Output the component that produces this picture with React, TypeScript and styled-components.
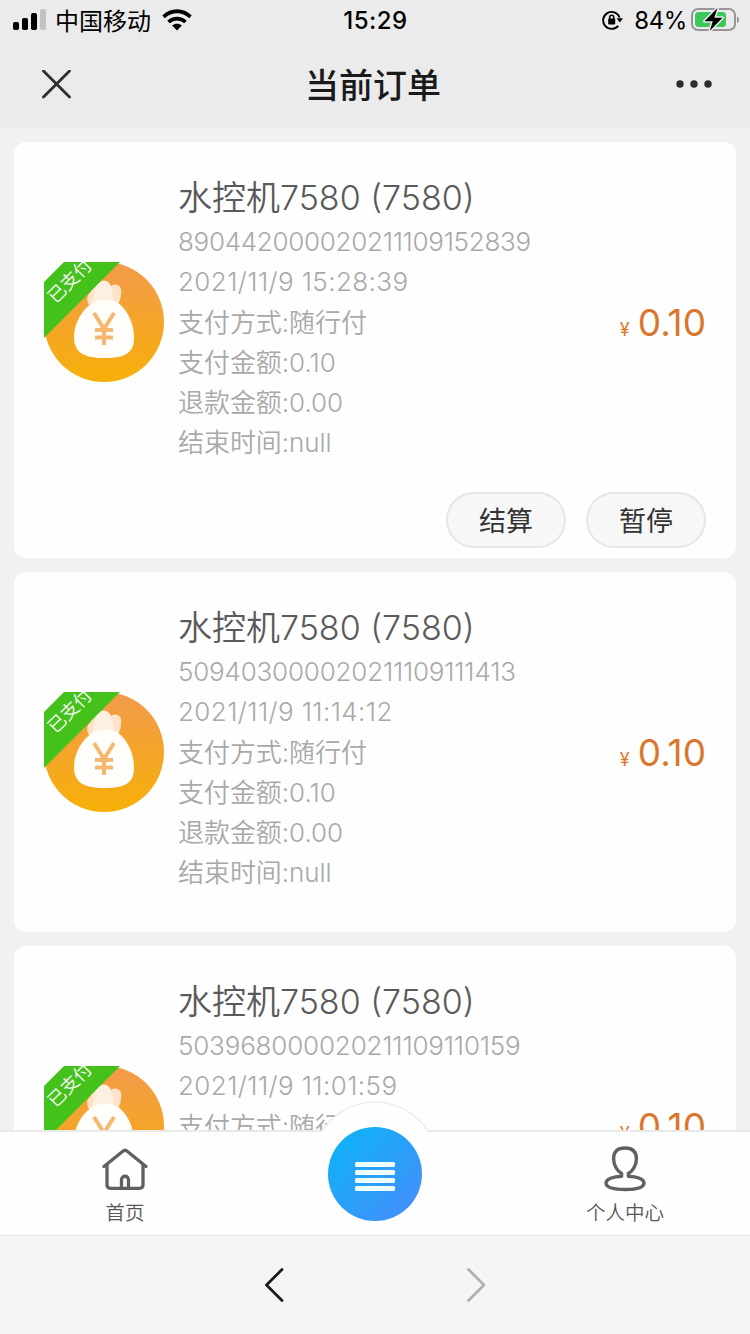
import React from "react";
import styled, { createGlobalStyle } from "styled-components";

const GlobalStyle = createGlobalStyle`
  * { box-sizing: border-box; }
  html, body { margin: 0; padding: 0; background: #f1f1f1; }
  body { font-family: Inter, "Noto Sans CJK SC", sans-serif; overflow: hidden; }
  svg { display: block; flex: none; }
`;

const Screen = styled.div`
  width: 750px;
  height: 1334px;
  display: flex;
  flex-direction: column;
  overflow: hidden;
  background: #f1f1f1;
`;

const TopArea = styled.header`
  flex: none;
  height: 128px;
  background: #ebebeb;
`;

const StatusBar = styled.div`
  display: grid;
  grid-template-columns: 1fr auto 1fr;
  align-items: center;
  height: 40px;
  padding: 0 11px 0 13px;
  color: #000;
`;

const StatusSide = styled.div<{ $end?: boolean }>`
  display: flex;
  align-items: center;
  justify-content: ${(p) => (p.$end ? "flex-end" : "flex-start")};
`;

const Carrier = styled.span`
  margin: 0 11px 0 9px;
  padding-top: 3px;
  font-size: 24px;
  line-height: 37px;
`;

const Clock = styled.span`
  padding: 0 1px 0 0;
  font-size: 24px;
  font-weight: 550;
  letter-spacing: 0.5px;
`;

const Percent = styled.span`
  margin: 0 4px 0 10px;
  font-size: 24px;
  letter-spacing: -0.4px;
`;

const NavBar = styled.div`
  display: grid;
  grid-template-columns: 1fr auto 1fr;
  align-items: center;
  height: 88px;
  padding: 0 38px 0 42px;
`;

const PageTitle = styled.h1`
  margin: 0;
  padding: 4px 8px 0 0;
  font-size: 34px;
  font-weight: 500;
  line-height: 84px;
  color: #1a1a1a;
`;

const MoreButton = styled.div`
  justify-self: end;
`;

const OrderList = styled.main`
  flex: 1;
  min-height: 0;
  overflow: hidden;
  display: flex;
  flex-direction: column;
  gap: 14px;
  padding: 14px 14px 0;
`;

const Card = styled.article`
  flex: none;
  padding-bottom: 10px;
  border-radius: 12px;
  background: #fefefe;
`;

const CardBody = styled.div`
  display: flex;
  align-items: center;
  height: 350px;
  padding: 35px 30px 25px 30px;
`;

const Badge = styled.div`
  position: relative;
  flex: none;
  width: 120px;
  height: 120px;
  overflow: hidden;
`;

const Ribbon = styled.span`
  position: absolute;
  top: 5px;
  left: -34px;
  width: 120px;
  height: 28px;
  line-height: 28px;
  text-align: center;
  font-size: 18px;
  font-weight: 350;
  color: #fff;
  transform: rotate(-45deg);
`;

const Details = styled.div`
  flex: 1;
  height: 290px;
  margin-left: 14px;
`;

const DeviceName = styled.h2`
  margin: 0 0 5px;
  padding-top: 1px;
  font-size: 34px;
  font-weight: 350;
  line-height: 39px;
  color: #5a5a5a;
`;

const Detail = styled.p`
  margin: 0;
  padding-top: 2px;
  font-size: 26px;
  font-weight: 350;
  line-height: 38px;
  letter-spacing: -0.05px;
  color: #a9a9a9;
  white-space: nowrap;
`;

const NumericDetail = styled(Detail)<{ $spacing: number }>`
  padding-top: 0;
  line-height: 40px;
  letter-spacing: ${(p) => p.$spacing}px;
`;

const Price = styled.div`
  display: flex;
  align-items: baseline;
  gap: 8px;
  padding-top: 9px;
  font-size: 37px;
  line-height: 44px;
  color: #d9782d;
`;

const Currency = styled.span`
  font-size: 18px;
`;

const Actions = styled.div`
  display: flex;
  justify-content: flex-end;
  gap: 20px;
  padding-right: 30px;
`;

const PillButton = styled.button`
  width: 120px;
  height: 56px;
  padding: 3px 0 0;
  border: 2px solid #e6e6e6;
  border-radius: 28px;
  background: #f7f7f7;
  font: 400 27px/49px Inter, "Noto Sans CJK SC", sans-serif;
  color: #333;
`;

const TabBar = styled.nav`
  position: relative;
  flex: none;
  display: flex;
  justify-content: space-between;
  height: 106px;
  border-top: 2px solid #e9e9e9;
  border-bottom: 1px solid #e2e2e2;
  background: #fefefe;
`;

const Tab = styled.div`
  display: flex;
  flex-direction: column;
  align-items: center;
  width: 250px;
  height: 98px;
  padding-top: 14px;
`;

const TabIcon = styled.div`
  display: flex;
  align-items: center;
  height: 46px;
`;

const TabLabel = styled.span`
  margin-top: 7px;
  font-size: 19.5px;
  font-weight: 350;
  line-height: 28px;
  color: #555;
`;

const CenterAction = styled.div`
  position: absolute;
  left: 303px;
  top: -32px;
  width: 144px;
  height: 134px;
`;

const BrowserBar = styled.footer`
  flex: none;
  display: flex;
  justify-content: center;
  align-items: center;
  gap: 182px;
  height: 98px;
  background: #f5f5f5;
`;

const SignalIcon = () => (
  <svg width="33" height="24" viewBox="0 0 33 24">
    <rect x="0" y="14" width="6" height="8" rx="1.8" />
    <rect x="9" y="10" width="6" height="12" rx="1.8" />
    <rect x="18" y="5" width="6" height="17" rx="1.8" />
    <rect x="27" y="1" width="6" height="21" rx="1.8" fill="#c3c3c3" />
  </svg>
);

const WifiIcon = () => (
  <svg width="30" height="22" viewBox="0 0 30 22" fill="none" stroke="#000" strokeWidth="3.8">
    <path d="M1.6 7.8C9.3.4 20.7.4 28.4 7.8" />
    <path d="M6.5 13C11.3 8.4 18.7 8.4 23.5 13" />
    <path d="M10.1 16.5c2.8-2.5 7-2.5 9.8 0L15 21.6Z" fill="#000" stroke="none" />
  </svg>
);

const RotationLockIcon = () => (
  <svg width="22" height="20" viewBox="0 0 22 20">
    <path d="M17.6 7.5A8.5 8.5 0 1 0 16.2 15.8" fill="none" stroke="#000" strokeWidth="1.9" />
    <path d="M14.6 8.2h6.4L17.8 12.6Z" />
    <rect x="6.2" y="8.5" width="7" height="6" rx=".8" />
    <path d="M7.7 9V7.2a2 2 0 0 1 4 0V9" fill="none" stroke="#000" strokeWidth="1.5" />
  </svg>
);

const BatteryIcon = () => (
  <svg width="48" height="26" viewBox="0 0 48 26">
    <rect x="1" y="2" width="43" height="21" rx="6" fill="none" stroke="#969696" strokeWidth="2" />
    <path d="M46 9.5c2.7 1.2 2.7 5.2 0 6.4Z" fill="#969696" />
    <rect x="4" y="5" width="31" height="15" rx="3.5" fill="#3cc75a" />
    <path
      d="M26.5 1 13.5 14.3h8.3L18.7 24 31.5 10.8h-8.2Z"
      stroke="#ebebeb"
      strokeWidth="3"
      paintOrder="stroke"
      strokeLinejoin="round"
    />
  </svg>
);

const CloseIcon = () => (
  <svg width="29" height="29" viewBox="0 0 29 29" stroke="#2d2d2d" strokeWidth="2.8" strokeLinecap="round">
    <path d="M1.5 1 27.5 27M27.5 1 1.5 27" />
  </svg>
);

const MoreIcon = () => (
  <svg width="36" height="8" viewBox="0 0 36 8" fill="#2d2d2d">
    <circle cx="4" cy="4" r="3.7" />
    <circle cx="18" cy="4" r="3.7" />
    <circle cx="32" cy="4" r="3.7" />
  </svg>
);

const MoneyBag = ({ id }: { id: string }) => (
  <svg width="120" height="120" viewBox="0 0 120 120">
    <defs>
      <linearGradient id={id} x1="0" y1="0" x2="0" y2="1">
        <stop offset="0" stopColor="#f39a4c" />
        <stop offset="1" stopColor="#f6b008" />
      </linearGradient>
    </defs>
    <circle cx="60" cy="60" r="60" fill={`url(#${id})`} />
    <path
      d="M45 43C42 38 43 32 47 30C46 24 52 21 54 22C57 17 64 17 67 24C72 20 79 24 77 32C77 37 75 40 73 45Z"
      fill="#fde3c9"
    />
    <path d="M52 25c2-8 13-8 15 0l3 12c-3 6-20 7-22 3Z" fill="#fef0e0" />
    <path
      d="M48 41C56 37 66 37 73 40C84 48 90 62 90 76C90 91 81 96 60 96C39 96 30 90 30 75C30 61 38 48 48 41Z"
      fill="#fffefb"
    />
    <path
      d="M50 51 60 67 70 51M60 66V83M51 68H69M51 75.5H69"
      fill="none"
      stroke="#f6b870"
      strokeWidth="4"
    />
    <path d="M0 20 20 0H76L0 76Z" fill="#45c11c" />
  </svg>
);

const HomeIcon = () => (
  <svg width="46" height="42" viewBox="0 0 46 42" fill="none" stroke="#606060" strokeWidth="3.3" strokeLinejoin="round" strokeLinecap="round">
    <path d="M5 16.5 2 18.5 20.8 3.2Q23 1.2 25.2 3.2L44 18.5 41 16.5" />
    <path d="M5 17V36.8Q5 40.3 8.5 40.3H37.5Q41 40.3 41 36.8V17" />
    <path d="M19.5 39.5V32c0-5 7-5 7 0v7.5" />
  </svg>
);

const PersonIcon = () => (
  <svg width="42" height="46" viewBox="0 0 42 46" fill="none" stroke="#606060" strokeWidth="3.4" strokeLinecap="round" strokeLinejoin="round">
    <path d="M17.6 30.2V27.6C13 25 9.6 19 9.6 12.8C9.6 5.5 13.4 2 21 2S32.4 5.5 32.4 12.8C32.4 19 29 25 24.4 27.6V30.2C33 30.5 40 33 40 37C40 41.5 32 43.5 21 43.5S2 41.5 2 37C2 33 9 30.5 17.6 30.2" />
  </svg>
);

const MenuIcon = () => (
  <svg width="144" height="134" viewBox="0 0 144 134">
    <defs>
      <linearGradient id="menu-disc" x1="0" y1="0" x2="1" y2="1">
        <stop offset="0.1" stopColor="#10b1f7" />
        <stop offset="0.9" stopColor="#438ffa" />
      </linearGradient>
    </defs>
    <path d="M19 31A63 63 0 0 1 125 31V36H19Z" fill="#fefefe" />
    <path d="M19 31A63 63 0 0 1 125 31" fill="none" stroke="#ececec" strokeWidth="1.5" />
    <circle cx="72" cy="74" r="47" fill="url(#menu-disc)" />
    <g fill="#effcff">
      <rect x="52" y="62" width="40" height="5" rx="1.5" />
      <rect x="52" y="70" width="40" height="5" rx="1.5" />
      <rect x="52" y="78" width="40" height="5" rx="1.5" />
      <rect x="52" y="86" width="40" height="5" rx="1.5" />
    </g>
  </svg>
);

const Chevron = ({ d, color }: { d: string; color: string }) => (
  <svg width="20" height="36" viewBox="0 0 20 36" fill="none" stroke={color} strokeWidth="2.8" strokeLinecap="round" strokeLinejoin="round">
    <path d={d} />
  </svg>
);

interface Order {
  no: string;
  time: string;
  spacing: number;
  actions?: string[];
}

const orders: Order[] = [
  { no: "890442000020211109152839", time: "2021/11/9 15:28:39", spacing: -0.29, actions: ["结算", "暂停"] },
  { no: "509403000020211109111413", time: "2021/11/9 11:14:12", spacing: -0.2 },
  { no: "503968000020211109110159", time: "2021/11/9 11:01:59", spacing: -0.18 },
];

const OrderCard = ({ no, time, spacing, actions }: Order) => (
  <Card>
    <CardBody>
      <Badge>
        <MoneyBag id={`disc-${no}`} />
        <Ribbon>已支付</Ribbon>
      </Badge>
      <Details>
        <DeviceName>水控机7580 (7580)</DeviceName>
        <NumericDetail $spacing={spacing}>{no}</NumericDetail>
        <NumericDetail $spacing={0.4}>{time}</NumericDetail>
        <Detail>支付方式:随行付</Detail>
        <Detail>支付金额:0.10</Detail>
        <Detail>退款金额:0.00</Detail>
        <Detail>结束时间:null</Detail>
      </Details>
      <Price>
        <Currency>¥</Currency>
        <span>0.10</span>
      </Price>
    </CardBody>
    {actions && (
      <Actions>
        {actions.map((label) => (
          <PillButton key={label}>{label}</PillButton>
        ))}
      </Actions>
    )}
  </Card>
);

export default function App() {
  return (
    <Screen>
      <GlobalStyle />
      <TopArea>
        <StatusBar>
          <StatusSide>
            <SignalIcon />
            <Carrier>中国移动</Carrier>
            <WifiIcon />
          </StatusSide>
          <Clock>15:29</Clock>
          <StatusSide $end>
            <RotationLockIcon />
            <Percent>84%</Percent>
            <BatteryIcon />
          </StatusSide>
        </StatusBar>
        <NavBar>
          <CloseIcon />
          <PageTitle>当前订单</PageTitle>
          <MoreButton>
            <MoreIcon />
          </MoreButton>
        </NavBar>
      </TopArea>
      <OrderList>
        {orders.map((order) => (
          <OrderCard key={order.no} {...order} />
        ))}
      </OrderList>
      <TabBar>
        <Tab>
          <TabIcon>
            <HomeIcon />
          </TabIcon>
          <TabLabel>首页</TabLabel>
        </Tab>
        <CenterAction>
          <MenuIcon />
        </CenterAction>
        <Tab>
          <TabIcon>
            <PersonIcon />
          </TabIcon>
          <TabLabel>个人中心</TabLabel>
        </Tab>
      </TabBar>
      <BrowserBar>
        <Chevron d="M18 2.5 2.5 18 18 33.5" color="#1a1a1a" />
        <Chevron d="M2.5 2.5 18 18 2.5 33.5" color="#b0b0b0" />
      </BrowserBar>
    </Screen>
  );
}
